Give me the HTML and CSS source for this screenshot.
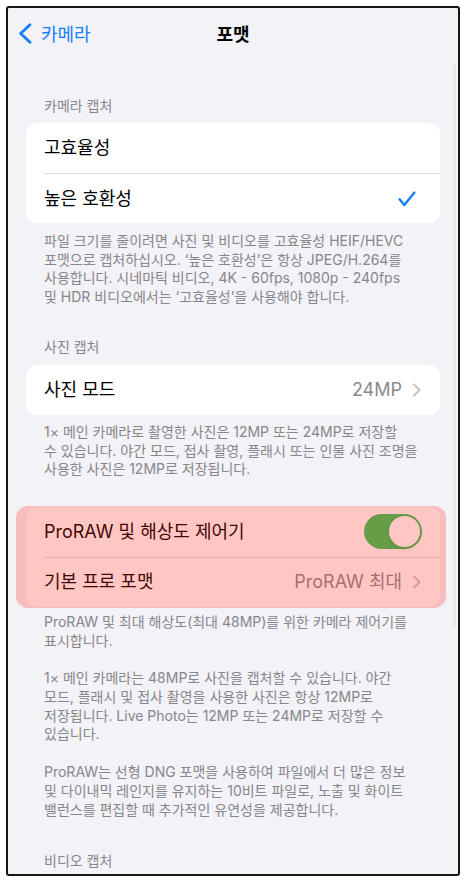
FILE: index.html
```html
<!DOCTYPE html>
<html lang="ko">
<head>
<meta charset="utf-8">
<title>포맷</title>
<link rel="stylesheet" href="styles.css">
</head>
<body>
<div class="frame">
  <div class="scrollbar"></div>
  <header class="nav">
    <a class="back">
      <svg class="back-icon" width="14" height="21" viewBox="0 0 14 21"><path d="M12 1.8 L2.6 10.5 L12 19.2" fill="none" stroke="currentColor" stroke-width="2.8" stroke-linecap="round" stroke-linejoin="round"/></svg>
      <span>카메라</span>
    </a>
    <h1 class="title">포맷</h1>
    <span></span>
  </header>

  <main class="content">
    <section class="group first">
      <h2 class="group-header">카메라 캡처</h2>
      <div class="card">
        <div class="row"><div class="row-body"><span class="label">고효율성</span></div></div>
        <div class="row"><div class="row-body"><span class="label">높은 호환성</span>
          <svg class="check" width="18" height="16" viewBox="0 0 18 16"><path d="M1.6 8.2 L6.3 14 L16.4 1.6" fill="none" stroke="currentColor" stroke-width="2.4" stroke-linecap="round" stroke-linejoin="round"/></svg>
        </div></div>
      </div>
      <div class="group-footer">
        <p>파일 크기를 줄이려면 사진 및 비디오를 고효율성 HEIF/HEVC<br>포맷으로 캡처하십시오. ‘높은 호환성’은 항상 JPEG/H.264를<br>사용합니다. 시네마틱 비디오, 4K - 60fps, 1080p - 240fps<br>및 HDR 비디오에서는 ‘고효율성’을 사용해야 합니다.</p>
      </div>
    </section>

    <section class="group">
      <h2 class="group-header">사진 캡처</h2>
      <div class="card">
        <div class="row"><div class="row-body"><span class="label">사진 모드</span>
          <span class="value">24MP</span>
          <svg class="chev" width="10" height="14" viewBox="0 0 10 14"><path d="M2 1.5 L7.6 7 L2 12.5" fill="none" stroke="currentColor" stroke-width="2" stroke-linecap="round" stroke-linejoin="round"/></svg>
        </div></div>
      </div>
      <div class="group-footer tight">
        <p>1× 메인 카메라로 촬영한 사진은 12MP 또는 24MP로 저장할<br>수 있습니다. 야간 모드, 접사 촬영, 플래시 또는 인물 사진 조명을<br>사용한 사진은 12MP로 저장됩니다.</p>
      </div>
    </section>

    <section class="group no-header">
      <div class="card-wrap">
        <div class="card">
          <div class="row"><div class="row-body"><span class="label">ProRAW 및 해상도 제어기</span>
            <span class="toggle on"><span class="knob"></span></span>
          </div></div>
          <div class="row"><div class="row-body"><span class="label">기본 프로 포맷</span>
            <span class="value">ProRAW 최대</span>
            <svg class="chev" width="10" height="14" viewBox="0 0 10 14"><path d="M2 1.5 L7.6 7 L2 12.5" fill="none" stroke="currentColor" stroke-width="2" stroke-linecap="round" stroke-linejoin="round"/></svg>
          </div></div>
        </div>
        <div class="highlight"></div>
      </div>
      <div class="group-footer close">
        <p>ProRAW 및 최대 해상도(최대 48MP)를 위한 카메라 제어기를<br>표시합니다.</p>
        <p>1× 메인 카메라는 48MP로 사진을 캡처할 수 있습니다. 야간<br>모드, 플래시 및 접사 촬영을 사용한 사진은 항상 12MP로<br>저장됩니다. Live Photo는 12MP 또는 24MP로 저장할 수<br>있습니다.</p>
        <p>ProRAW는 선형 DNG 포맷을 사용하여 파일에서 더 많은 정보<br>및 다이내믹 레인지를 유지하는 10비트 파일로, 노출 및 화이트<br>밸런스를 편집할 때 추가적인 유연성을 제공합니다.</p>
      </div>
    </section>

    <section class="group last">
      <h2 class="group-header">비디오 캡처</h2>
    </section>
  </main>
</div>
</body>
</html>
```

FILE: styles.css
```css
* { box-sizing: border-box; }

html, body {
  margin: 0;
  padding: 0;
  background: #ffffff;
}

body {
  font-family: Inter, "Noto Sans CJK KR", sans-serif;
  color: #000;
}

.frame {
  position: relative;
  margin: 6px;
  width: 454px;
  height: 870px;
  border: 2px solid #161616;
  border-radius: 3px;
  background: #f2f2f7;
  overflow: hidden;
}

.scrollbar {
  position: absolute;
  right: 2px;
  top: 55px;
  width: 3px;
  height: 564px;
  border-radius: 2px;
  background: rgba(0, 0, 0, 0.045);
}

.nav {
  height: 50px;
  display: grid;
  grid-template-columns: 1fr auto 1fr;
  align-items: center;
}

.back {
  display: flex;
  align-items: center;
  padding-left: 10px;
  color: #157efb;
  font-size: 18px;
  line-height: 22px;
  font-family: "Noto Sans CJK KR", sans-serif;
}

.back-icon {
  margin-right: 9px;
  flex: none;
}

.title {
  margin: 0;
  font-size: 18px;
  font-weight: 700;
  line-height: 22px;
  font-family: "Noto Sans CJK KR", sans-serif;
}

.content {
  padding: 0 18px;
}

.group-header {
  margin: 0 0 9px;
  padding: 31px 0 0 18px;
  font-size: 14px;
  font-weight: 400;
  line-height: 18px;
  color: #86868b;
}

.group.first .group-header {
  padding-top: 39px;
  margin-bottom: 8px;
}

.group.last .group-header {
  padding-top: 33px;
}

.group.no-header {
  padding-top: 28px;
}

.card-wrap {
  position: relative;
}

.card {
  background: #ffffff;
  border-radius: 11px;
  overflow: hidden;
}

.row {
  height: 50px;
  padding-left: 18px;
  display: flex;
}

.row-body {
  flex: 1;
  display: flex;
  align-items: center;
  padding-right: 18px;
}

.row + .row .row-body {
  border-top: 1px solid #dcdce0;
}

.label {
  flex: 1;
  font-size: 18px;
  line-height: 22px;
  white-space: nowrap;
}

.value {
  font-size: 18px;
  line-height: 22px;
  color: #8a8a8e;
  margin-right: 10px;
}

.chev {
  color: #c4c4c8;
  flex: none;
}

.check {
  color: #157efb;
  margin-right: 6px;
  flex: none;
}

.toggle {
  position: relative;
  width: 58px;
  height: 35px;
  border-radius: 18px;
  background: #e9e9eb;
  flex: none;
}

.toggle.on {
  background: #34c759;
}

.toggle .knob {
  position: absolute;
  top: 2px;
  left: 2px;
  width: 31px;
  height: 31px;
  border-radius: 50%;
  background: #ffffff;
  box-shadow: 0 2px 5px rgba(0, 0, 0, 0.12);
}

.toggle.on .knob {
  left: auto;
  right: 2px;
}

.highlight {
  position: absolute;
  top: -1px;
  bottom: -1px;
  left: -10px;
  right: -6px;
  border-radius: 12px;
  background: rgba(255, 30, 20, 0.25);
  pointer-events: none;
}

.group-footer {
  margin-top: 9px;
  padding: 0 18px;
  font-size: 14px;
  line-height: 18.7px;
  color: #86868b;
  white-space: nowrap;
}

.group-footer.tight {
  margin-top: 8px;
}

.group-footer.close {
  margin-top: 6px;
}

.group-footer p {
  margin: 0;
}

.group-footer p + p {
  margin-top: 19px;
}
```
